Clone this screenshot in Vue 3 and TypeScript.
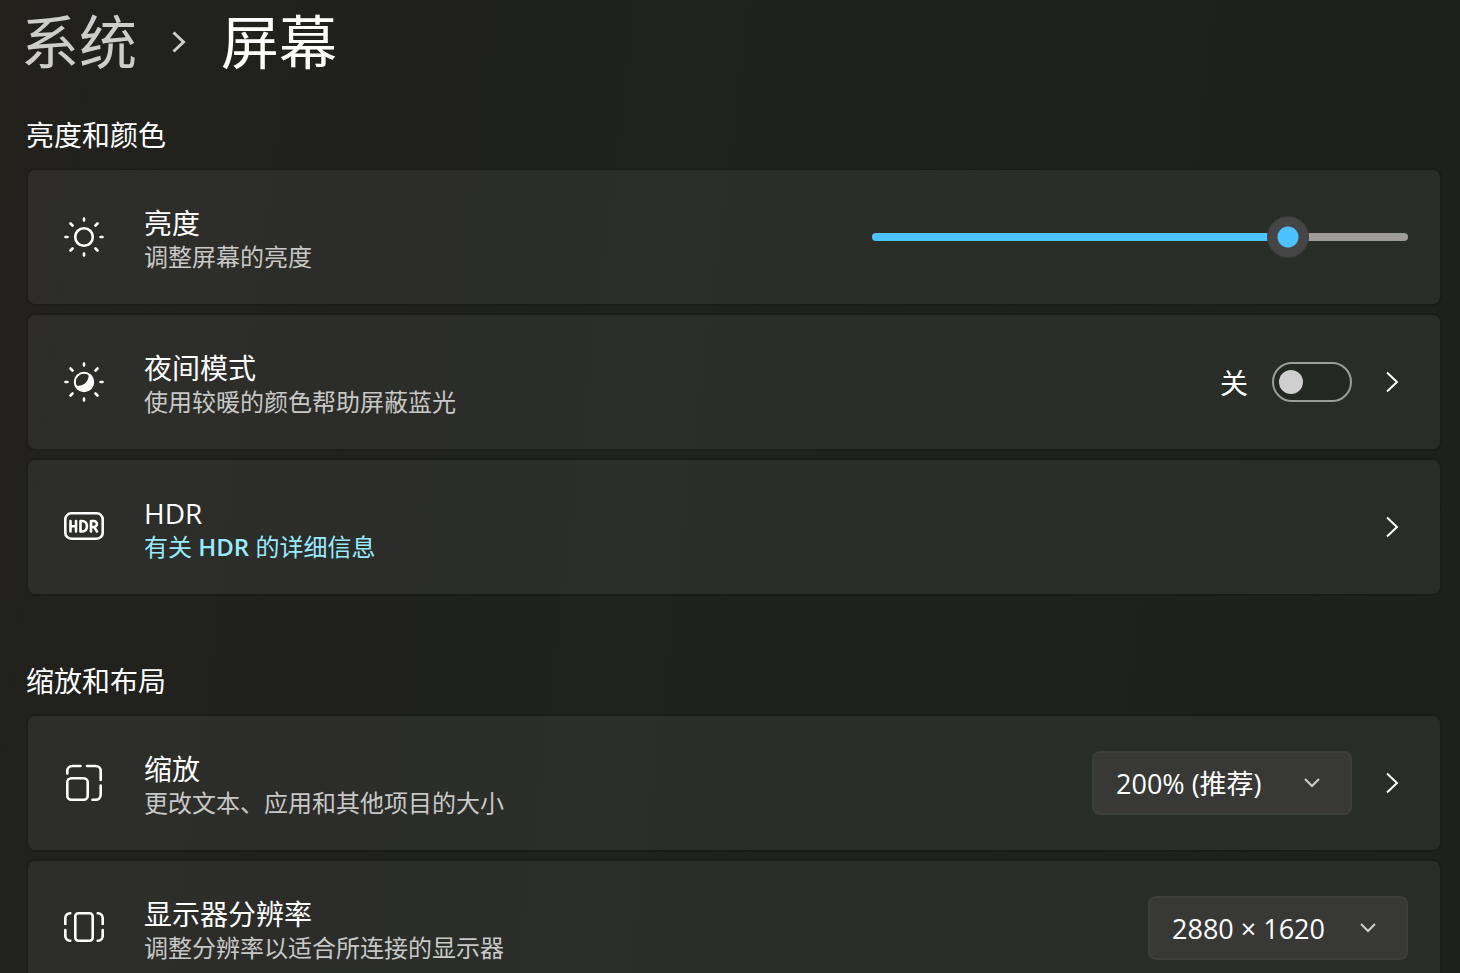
<script setup lang="ts">
import { computed, ref } from 'vue'

const brightness = ref(80)
const nightLight = ref(false)
const scale = ref('200')
const resolution = ref('2880x1620')

const fill = computed(() => ({ '--fill': `${brightness.value}%` }))
</script>

<template>
  <main class="page">
    <nav class="crumbs" aria-label="导航">
      <a class="crumb" href="#">系统</a>
      <svg class="crumb-arrow" viewBox="0 0 16 24" aria-hidden="true">
        <path d="M2.500 2.500 12.500 12 2.500 21.500" />
      </svg>
      <h1>屏幕</h1>
    </nav>

    <section class="group">
      <h2>亮度和颜色</h2>

      <div class="card">
        <svg class="icon" viewBox="0 0 40 40" aria-hidden="true">
          <circle cx="20" cy="20" r="8.800" />
          <path d="M20 1.500v2M20 36.500v2M1.500 20h2M36.500 20h2M6.500 6.500l2 2M31.500 31.500l2 2M6.500 33.500l2-2M31.500 8.500l2-2" />
        </svg>
        <div class="text">
          <label class="title" for="brightness">亮度</label>
          <span class="note">调整屏幕的亮度</span>
        </div>
        <input id="brightness" v-model.number="brightness" class="slider" :style="fill" type="range" min="0" max="100" />
      </div>

      <div class="card">
        <svg class="icon" viewBox="0 0 40 40" aria-hidden="true">
          <circle class="thin" cx="20" cy="20" r="9.200" />
          <path class="solid" d="M24.500 12.200A9 9 0 1 1 12.200 23.500C19.500 25 25.500 19 24.500 12.200Z" />
          <path d="M20 1.500v2M20 36.500v2M1.500 20h2M36.500 20h2M6.500 6.500l2 2M31.500 31.500l2 2M6.500 33.500l2-2M31.500 8.500l2-2" />
        </svg>
        <div class="text">
          <label class="title" for="night">夜间模式</label>
          <span class="note">使用较暖的颜色帮助屏蔽蓝光</span>
        </div>
        <label class="state" for="night">{{ nightLight ? '开' : '关' }}</label>
        <input id="night" v-model="nightLight" class="toggle" type="checkbox" role="switch" />
        <button class="more" type="button" aria-label="夜间模式">
          <svg viewBox="0 0 16 24" aria-hidden="true"><path d="M3 2.500 13 12 3 21.500" /></svg>
        </button>
      </div>

      <div class="card">
        <svg class="icon" viewBox="0 0 40 40" aria-hidden="true">
          <rect x="1.300" y="6.300" width="37.400" height="25.400" rx="6" />
          <path class="mark" d="M6.500 14v10.500M12 14v10.500M6.500 19.200H12M16.500 14v10.500h1.500c3.200 0 4.900-2 4.900-5.200s-1.700-5.300-4.900-5.300ZM27 24.500V14h2.900a3 3 0 0 1 0 6h-2.900M30.200 20 33 24.500" />
        </svg>
        <div class="text">
          <span class="title">HDR</span>
          <a class="link" href="#">有关 <b>HDR</b> 的详细信息</a>
        </div>
        <button class="more" type="button" aria-label="HDR">
          <svg viewBox="0 0 16 24" aria-hidden="true"><path d="M3 2.500 13 12 3 21.500" /></svg>
        </button>
      </div>
    </section>

    <section class="group">
      <h2>缩放和布局</h2>

      <div class="card">
        <svg class="icon" viewBox="0 0 40 40" aria-hidden="true">
          <rect x="3.300" y="15.300" width="20.400" height="21.400" rx="4" />
          <path d="M3.300 10.500V8a5 5 0 0 1 5-5H16.500M23 3h8.700a5 5 0 0 1 5 5v9M36.700 22.500v9.200a5 5 0 0 1-5 5H28.500" />
        </svg>
        <div class="text">
          <label class="title" for="scale">缩放</label>
          <span class="note">更改文本、应用和其他项目的大小</span>
        </div>
        <div class="picker">
          <select id="scale" v-model="scale">
            <option value="200">200% (推荐)</option>
            <option value="175">175%</option>
            <option value="150">150%</option>
          </select>
          <svg viewBox="0 0 18 12" aria-hidden="true"><path d="M2 2 9 9 16 2" /></svg>
        </div>
        <button class="more" type="button" aria-label="缩放">
          <svg viewBox="0 0 16 24" aria-hidden="true"><path d="M3 2.500 13 12 3 21.500" /></svg>
        </button>
      </div>

      <div class="card">
        <svg class="icon" viewBox="0 0 40 40" aria-hidden="true">
          <rect x="11.300" y="5.300" width="17.400" height="27.400" rx="3" />
          <path d="M6.300 5.300H6a4.700 4.700 0 0 0-4.700 4.700v6M1.300 22V28A4.700 4.700 0 0 0 6 32.700h.3M33.700 5.300h.3a4.700 4.700 0 0 1 4.700 4.700v6M38.700 22V28a4.700 4.700 0 0 1-4.700 4.700h-.3" />
        </svg>
        <div class="text">
          <label class="title" for="resolution">显示器分辨率</label>
          <span class="note">调整分辨率以适合所连接的显示器</span>
        </div>
        <div class="picker">
          <select id="resolution" v-model="resolution">
            <option value="2880x1620">2880 × 1620</option>
            <option value="1920x1080">1920 × 1080</option>
          </select>
          <svg viewBox="0 0 18 12" aria-hidden="true"><path d="M2 2 9 9 16 2" /></svg>
        </div>
      </div>
    </section>
  </main>
</template>

<style>
body {
  margin: 0;
  background: #1f211d;
}
</style>

<style scoped>
.page {
  box-sizing: border-box;
  height: 100vh;
  overflow-y: auto;
  scrollbar-width: none;
  padding: 4px 20px 20px 28px;
  background: linear-gradient(97deg, #22211c 0%, #20211e 25%, #1e221d 55%, #1c211b 100%);
  color: #fff;
  font-family: "Open Sans", "Noto Sans CJK SC", sans-serif;
  font-size: 28px;
}

.crumbs {
  display: flex;
  align-items: center;
  margin-left: -7px;
  height: 76px;
  font-size: 58px;
  line-height: 76px;
}

.crumb {
  color: #cdcdcc;
  font-weight: 400;
  text-decoration: none;
}

.crumb-arrow {
  width: 16px;
  height: 24px;
  margin: 0 34px;
  fill: none;
  stroke: #cdcdcc;
  stroke-width: 3;
}

h1 {
  margin: 0;
  font-size: 58px;
  font-weight: 400;
  line-height: 76px;
}

.group {
  display: flex;
  flex-direction: column;
  gap: 11px;
  margin-top: 35px;
}

.group + .group {
  margin-top: 67px;
}

h2 {
  margin: 0 0 4px -2px;
  font-size: 28px;
  font-weight: 400;
  line-height: 40px;
}

.card {
  display: flex;
  align-items: center;
  box-sizing: border-box;
  min-height: 134px;
  flex-shrink: 0;
  padding: 0 32px 0 36px;
  border-radius: 7px;
  background: rgba(255, 255, 255, 0.053);
  box-shadow: 0 0 0 2px rgba(0, 0, 0, 0.1);
}

.icon {
  flex: none;
  width: 40px;
  height: 40px;
  fill: none;
  stroke: #fff;
  stroke-width: 2.6;
  stroke-linecap: round;
  stroke-linejoin: round;
}

.icon .solid {
  fill: #fff;
  stroke: none;
}

.icon .thin {
  stroke-width: 2;
}

.text {
  display: flex;
  flex: 1;
  flex-direction: column;
  align-items: flex-start;
  margin-left: 40px;
  padding-top: 6px;
  line-height: 34px;
}

.note,
.link {
  color: #c8c8c6;
  font-size: 24px;
}

.link {
  color: #99ebff;
  text-decoration: none;
}

.link b {
  font-weight: 600;
}

.slider {
  appearance: none;
  width: 536px;
  height: 42px;
  margin: 0;
  background: transparent;
}

.slider::-webkit-slider-runnable-track {
  height: 8px;
  border-radius: 4px;
  background: linear-gradient(to right, #4cc2ff var(--fill), #9e9d9b var(--fill));
}

.slider::-webkit-slider-thumb {
  appearance: none;
  box-sizing: border-box;
  width: 42px;
  height: 42px;
  margin-top: -17px;
  border: 1px solid #3a3c3a;
  border-radius: 50%;
  background: radial-gradient(circle, #4cc2ff 10px, #454545 11px);
}

.toggle {
  appearance: none;
  display: flex;
  align-items: center;
  box-sizing: border-box;
  width: 80px;
  height: 40px;
  margin: 0 0 0 24px;
  padding: 0 5px;
  border: 2px solid #9b9d9a;
  border-radius: 20px;
  background: rgba(0, 0, 0, 0.1);
}

.toggle::before {
  width: 24px;
  height: 24px;
  border-radius: 50%;
  background: #cfcfcf;
  content: "";
}

.toggle:checked {
  justify-content: flex-end;
  background: #4cc2ff;
}

.more {
  display: flex;
  justify-content: center;
  width: 32px;
  margin: 0 0 0 24px;
  padding: 0;
  border: 0;
  background: none;
}

.more svg {
  width: 16px;
  height: 24px;
  fill: none;
  stroke: #fff;
  stroke-width: 2;
}

.picker {
  display: grid;
  align-items: center;
  width: 260px;
}

.picker > * {
  grid-area: 1 / 1;
}

.picker select {
  appearance: none;
  box-sizing: border-box;
  width: 100%;
  height: 64px;
  padding: 0 60px 0 22px;
  border: 2px solid #3d3f3d;
  border-radius: 8px;
  background: #383937;
  color: #fff;
  font-family: inherit;
  font-size: 27px;
}

.picker svg {
  justify-self: end;
  width: 18px;
  height: 12px;
  margin-right: 31px;
  fill: none;
  stroke: #cdcdcc;
  stroke-width: 2;
  pointer-events: none;
}
</style>
